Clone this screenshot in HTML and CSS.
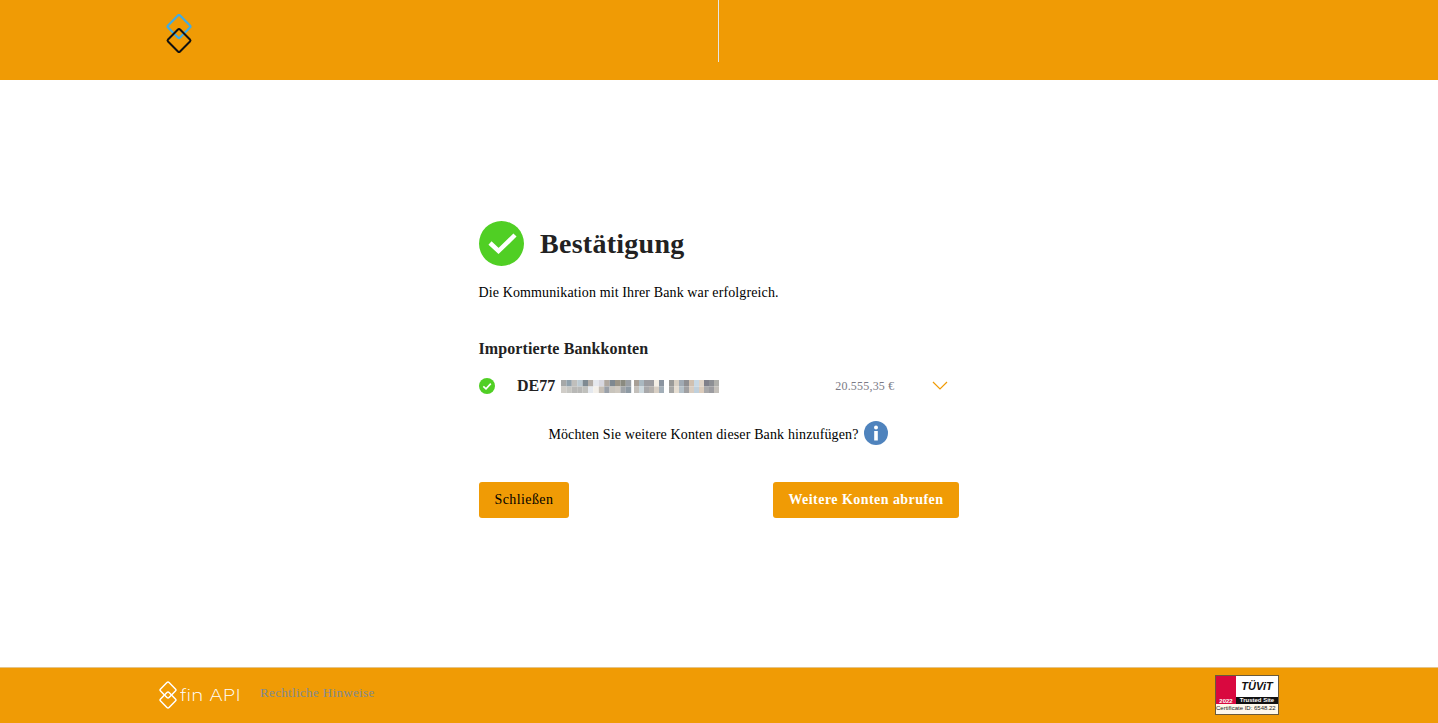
FILE: index.html
```html
<!DOCTYPE html>
<html lang="de">
<head>
    <meta charset="UTF-8">
    <title>Bestätigung</title>
    <link rel="stylesheet" href="styles.css">
</head>
<body>
    <header class="top-bar">
        <div class="top-left">
            <svg class="bank-logo" width="28" height="42" viewBox="0 0 28 42">
                <rect x="5.5" y="4" width="17" height="17" rx="1.5" transform="rotate(45 14 12.5)" fill="none" stroke="#3fabe6" stroke-width="2.2"/>
                <rect x="5.5" y="18" width="17" height="17" rx="1.5" transform="rotate(45 14 26.5)" fill="none" stroke="#111" stroke-width="2"/>
            </svg>
        </div>
        <div class="top-line"></div>
        <div class="top-right"></div>
    </header>

    <main class="content">
        <div class="box">
            <div class="title-row">
                <svg width="45" height="45" viewBox="0 0 45 45">
                    <circle cx="22.5" cy="22.5" r="22.5" fill="#50cf24"/>
                    <path d="M11 22 L19.5 30 L36 14" fill="none" stroke="#fff" stroke-width="4.5"/>
                </svg>
                <h1>Bestätigung</h1>
            </div>
            <p class="message">Die Kommunikation mit Ihrer Bank war erfolgreich.</p>

            <h2>Importierte Bankkonten</h2>
            <div class="account">
                <svg class="account-check" width="16" height="16" viewBox="0 0 16 16">
                    <circle cx="8" cy="8" r="8" fill="#50cf24"/>
                    <path d="M4.3 8.3 L7 10.8 L11.8 5.6" fill="none" stroke="#fff" stroke-width="1.6"/>
                </svg>
                <span class="iban">DE77</span>
                <!-- unkenntlich gemachte IBAN -->
                <svg class="blur" width="165" height="13" viewBox="0 0 165 13">
                    <rect x="1" y="0" width="5.4" height="6.5" fill="#a6a8a8"/>
                    <rect x="6.4" y="0" width="5.4" height="6.5" fill="#8fa0ab"/>
                    <rect x="11.8" y="0" width="5.4" height="6.5" fill="#c0bfbc"/>
                    <rect x="17.2" y="0" width="5.4" height="6.5" fill="#bccad2"/>
                    <rect x="22.6" y="0" width="5.4" height="6.5" fill="#7f8a92"/>
                    <rect x="28" y="0" width="5.4" height="6.5" fill="#b4aea8"/>
                    <rect x="33.4" y="0" width="5.4" height="6.5" fill="#e5e8ee"/>
                    <rect x="38.8" y="0" width="5.4" height="6.5" fill="#d8d8e0"/>
                    <rect x="44.2" y="0" width="5.4" height="6.5" fill="#b0a8a0"/>
                    <rect x="49.6" y="0" width="5.4" height="6.5" fill="#7e8890"/>
                    <rect x="55" y="0" width="5.4" height="6.5" fill="#9a9486"/>
                    <rect x="60.4" y="0" width="5.4" height="6.5" fill="#8a8a80"/>
                    <rect x="65.8" y="0" width="5.4" height="6.5" fill="#9a9fa5"/>
                    <rect x="1" y="6.5" width="5.4" height="6.5" fill="#d0cdc8"/>
                    <rect x="6.4" y="6.5" width="5.4" height="6.5" fill="#c6c6c2"/>
                    <rect x="11.8" y="6.5" width="5.4" height="6.5" fill="#b8b8b6"/>
                    <rect x="17.2" y="6.5" width="5.4" height="6.5" fill="#b8b8b6"/>
                    <rect x="22.6" y="6.5" width="5.4" height="6.5" fill="#c0c0bc"/>
                    <rect x="28" y="6.5" width="5.4" height="6.5" fill="#e4e8ee"/>
                    <rect x="33.4" y="6.5" width="5.4" height="6.5" fill="#f4f0ea"/>
                    <rect x="38.8" y="6.5" width="5.4" height="6.5" fill="#c6bfb6"/>
                    <rect x="44.2" y="6.5" width="5.4" height="6.5" fill="#9aa0a8"/>
                    <rect x="49.6" y="6.5" width="5.4" height="6.5" fill="#c8c4bc"/>
                    <rect x="55" y="6.5" width="5.4" height="6.5" fill="#cfc9c0"/>
                    <rect x="60.4" y="6.5" width="5.4" height="6.5" fill="#a0a4a8"/>
                    <rect x="65.8" y="6.5" width="5.4" height="6.5" fill="#8e9aa4"/>

                    <rect x="74" y="0" width="5" height="6.5" fill="#a89f96"/>
                    <rect x="79" y="0" width="5" height="6.5" fill="#aab8c0"/>
                    <rect x="84" y="0" width="5" height="6.5" fill="#9c9ca0"/>
                    <rect x="89" y="0" width="5" height="6.5" fill="#9c9ca0"/>
                    <rect x="94" y="0" width="5" height="6.5" fill="#f4efe6"/>
                    <rect x="99" y="0" width="5" height="6.5" fill="#8a94a0"/>
                    <rect x="74" y="6.5" width="5" height="6.5" fill="#c4c0bb"/>
                    <rect x="79" y="6.5" width="5" height="6.5" fill="#cdd8dd"/>
                    <rect x="84" y="6.5" width="5" height="6.5" fill="#a8a8aa"/>
                    <rect x="89" y="6.5" width="5" height="6.5" fill="#b4b0ac"/>
                    <rect x="94" y="6.5" width="5" height="6.5" fill="#d8cfc4"/>
                    <rect x="99" y="6.5" width="5" height="6.5" fill="#a2aeb8"/>

                    <rect x="109" y="0" width="5" height="6.5" fill="#9a9a98"/>
                    <rect x="114" y="0" width="5" height="6.5" fill="#d8d0c4"/>
                    <rect x="119" y="0" width="5" height="6.5" fill="#a0aab4"/>
                    <rect x="124" y="0" width="5" height="6.5" fill="#8f8f92"/>
                    <rect x="129" y="0" width="5" height="6.5" fill="#d0c0b0"/>
                    <rect x="134" y="0" width="5" height="6.5" fill="#c8d8e4"/>
                    <rect x="139" y="0" width="5" height="6.5" fill="#e0d4c8"/>
                    <rect x="144" y="0" width="5" height="6.5" fill="#80808a"/>
                    <rect x="149" y="0" width="5" height="6.5" fill="#8d8f94"/>
                    <rect x="154" y="0" width="5" height="6.5" fill="#b0b0ac"/>
                    <rect x="109" y="6.5" width="5" height="6.5" fill="#a6a6a4"/>
                    <rect x="114" y="6.5" width="5" height="6.5" fill="#e6ded2"/>
                    <rect x="119" y="6.5" width="5" height="6.5" fill="#b4c0c8"/>
                    <rect x="124" y="6.5" width="5" height="6.5" fill="#a0a0a2"/>
                    <rect x="129" y="6.5" width="5" height="6.5" fill="#d8ccc0"/>
                    <rect x="134" y="6.5" width="5" height="6.5" fill="#c0d0dc"/>
                    <rect x="139" y="6.5" width="5" height="6.5" fill="#dcccbc"/>
                    <rect x="144" y="6.5" width="5" height="6.5" fill="#a8a8aa"/>
                    <rect x="149" y="6.5" width="5" height="6.5" fill="#9c9ca0"/>
                    <rect x="154" y="6.5" width="5" height="6.5" fill="#c4c0ba"/>
                </svg>
                <span class="amount">20.555,35 €</span>
                <svg class="chevron" width="16" height="9" viewBox="0 0 16 9">
                    <path d="M1 1 L8 8 L15 1" fill="none" stroke="#f09b05" stroke-width="1.2"/>
                </svg>
            </div>

            <div class="more">
                <span class="more-text">Möchten Sie weitere Konten dieser Bank hinzufügen?</span>
                <svg width="24" height="24" viewBox="0 0 24 24">
                    <circle cx="12" cy="12" r="12" fill="#4f83bd"/>
                    <circle cx="12" cy="6.5" r="2" fill="#fff"/>
                    <rect x="10.2" y="10" width="3.6" height="9.5" fill="#fff"/>
                </svg>
            </div>

            <div class="buttons">
                <button class="btn">Schließen</button>
                <button class="btn btn-main">Weitere Konten abrufen</button>
            </div>
        </div>
    </main>

    <footer class="bottom-bar">
        <div class="finapi">
            <svg width="20" height="28" viewBox="0 0 20 28">
                <rect x="4" y="3" width="12" height="12" rx="1.5" transform="rotate(45 10 9)" fill="none" stroke="#fff" stroke-width="1.5"/>
                <rect x="4" y="13" width="12" height="12" rx="1.5" transform="rotate(45 10 19)" fill="none" stroke="#fff" stroke-width="1.5"/>
            </svg>
            <span class="finapi-name">fin API</span>
        </div>
        <a class="legal" href="#">Rechtliche Hinweise</a>
        <div class="seal">
            <div class="seal-top">
                <div class="seal-red"><span>2022</span></div>
                <div class="seal-side">
                    <div class="seal-brand">TÜViT</div>
                    <div class="seal-trust">Trusted Site</div>
                </div>
            </div>
            <div class="seal-cert">Certificate ID: 6548.22</div>
        </div>
    </footer>
</body>
</html>
```

FILE: styles.css
```css
body {
    margin: 0;
    height: 723px;
    display: flex;
    flex-direction: column;
    background-color: #fff;
    color: #000;
    font-family: "Liberation Serif", "Times New Roman", serif;
    font-size: 14px;
    overflow: hidden;
}

/* header */
.top-bar {
    height: 80px;
    display: flex;
    background-color: #f09b05;
}
.top-left {
    width: 718px;
    padding: 14px 0 0 165px;
    box-sizing: border-box;
}
.top-line {
    width: 1px;
    height: 62px;
    background-color: #e6e6e6;
}
.top-right {
    flex: 1;
}

/* main block */
.content {
    flex: 1;
    padding: 141px 0 0 479px;
}
.box {
    width: 480px;
}
.title-row {
    display: flex;
    align-items: center;
    gap: 16px;
}
h1 {
    margin: 0;
    font-size: 28px;
    line-height: 45px;
    letter-spacing: 0.27px;
    color: #222;
}
.message {
    margin: 18px 0 0 -0.5px;
    line-height: 18px;
    letter-spacing: 0.12px;
}
h2 {
    margin: 38px 0 0 -0.5px;
    font-size: 16px;
    line-height: 18px;
    letter-spacing: 0.1px;
    color: #222;
}
.account {
    display: flex;
    align-items: center;
    height: 24px;
    margin-top: 16px;
}
.account-check {
    margin-right: 22px;
}
.iban {
    font-size: 16px;
    font-weight: bold;
    color: #222;
    margin-right: 5px;
}
.amount {
    margin-left: 110px;
    font-size: 12px;
    letter-spacing: 0.2px;
    color: #7b7b86;
}
.chevron {
    margin-left: 38px;
    margin-top: -2px;
}
.more {
    display: flex;
    justify-content: center;
    align-items: center;
    gap: 5px;
    margin-top: 23px;
    height: 24px;
    padding-right: 2px;
}
.more-text {
    padding-top: 4px;
    letter-spacing: 0.14px;
}
.buttons {
    display: flex;
    justify-content: space-between;
    margin-top: 37px;
}
.btn {
    height: 36px;
    padding: 0 15.5px;
    border: none;
    border-radius: 3px;
    background-color: #f09b05;
    color: #000;
    font-family: inherit;
    font-size: 14px;
    letter-spacing: 0.4px;
    cursor: pointer;
}
.btn-main {
    padding: 0 15.5px;
    color: #fff;
    font-weight: bold;
    letter-spacing: 0.45px;
}

/* footer */
.bottom-bar {
    height: 54px;
    display: flex;
    align-items: center;
    border-top: 1px solid #e3c48c;
    background-color: #f09b05;
    padding: 0 159px 1px 158px;
}
.finapi {
    display: flex;
    align-items: center;
    gap: 2px;
    color: #fff;
}
.finapi-name {
    display: inline-block;
    width: 60px;
    font-family: "Inter", sans-serif;
    font-weight: 200;
    font-size: 16px;
    white-space: nowrap;
    transform: scaleX(1.29);
    transform-origin: left;
}
.legal {
    margin: 0 0 4px 20px;
    color: #7f8a92;
    font-size: 13px;
    letter-spacing: 0.35px;
    text-decoration: none;
}
.seal {
    margin-left: auto;
    width: 62px;
    height: 38px;
    border: 1px solid #6b5a3a;
    background-color: #fff8ea;
    font-family: "Liberation Sans", Arial, sans-serif;
}
.seal-top {
    display: flex;
    height: 28px;
}
.seal-red {
    width: 20px;
    display: flex;
    align-items: flex-end;
    justify-content: center;
    background-color: #d9083f;
    color: #fff;
    font-size: 6px;
    font-weight: bold;
}
.seal-side {
    flex: 1;
    display: flex;
    flex-direction: column;
    justify-content: flex-end;
    background-color: #fff;
}
.seal-brand {
    flex: 1;
    padding-top: 4px;
    box-sizing: border-box;
    text-align: center;
    font-size: 11px;
    font-style: italic;
    font-weight: bold;
    color: #111;
}
.seal-trust {
    height: 7px;
    line-height: 7px;
    background-color: #111;
    color: #fff;
    font-size: 6px;
    font-weight: bold;
    text-align: center;
    white-space: nowrap;
}
.seal-cert {
    font-size: 6px;
    line-height: 9px;
    color: #222;
    white-space: nowrap;
}
```
